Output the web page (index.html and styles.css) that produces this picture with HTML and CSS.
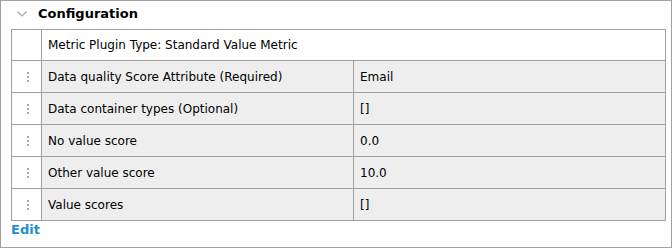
FILE: index.html
```html
<!DOCTYPE html>
<html lang="en">
<head>
    <meta charset="UTF-8">
    <title>Configuration</title>
    <link rel="stylesheet" href="styles.css">
</head>
<body>
    <div class="panel">
        <div class="panel-header">
            <svg class="chevron" width="10" height="6" viewBox="0 0 10 6">
                <path d="M0.5 0.5 L5 5 L9.5 0.5" fill="none" stroke="#a8a8a8" stroke-width="1.2"/>
            </svg>
            <span class="panel-title">Configuration</span>
        </div>
        <table class="config-table">
            <tr class="type-row">
                <td class="handle"></td>
                <td colspan="2">Metric Plugin Type: Standard Value Metric</td>
            </tr>
            <tr>
                <td class="handle"><span class="dots"></span></td>
                <td class="name">Data quality Score Attribute (Required)</td>
                <td>Email</td>
            </tr>
            <tr>
                <td class="handle"><span class="dots"></span></td>
                <td class="name">Data container types (Optional)</td>
                <td>[]</td>
            </tr>
            <tr>
                <td class="handle"><span class="dots"></span></td>
                <td class="name">No value score</td>
                <td>0.0</td>
            </tr>
            <tr>
                <td class="handle"><span class="dots"></span></td>
                <td class="name">Other value score</td>
                <td>10.0</td>
            </tr>
            <tr>
                <td class="handle"><span class="dots"></span></td>
                <td class="name">Value scores</td>
                <td>[]</td>
            </tr>
        </table>
        <a class="edit-link" href="#">Edit</a>
    </div>
</body>
</html>
```

FILE: styles.css
```css
/* Base page */
body {
    margin: 0;
    font-family: 'DejaVu Sans', sans-serif;
    font-size: 12px;
    color: #000;
    background: #fff;
}
/* Outer bordered panel */
.panel {
    width: 672px;
    height: 248px;
    box-sizing: border-box;
    border: 1px solid #a0a0a0;
    padding: 0 5px 0 10px;
}
.panel-header {
    display: flex;
    align-items: center;
    box-sizing: border-box;
    height: 28px;
    padding: 0 0 3px 6px;
}
.chevron {
    margin-right: 11px;
}
.panel-title {
    font-weight: bold;
    font-size: 13px;
}
/* Property table */
.config-table {
    width: 655px;
    border-collapse: collapse;
}
.config-table td {
    border: 1px solid #a0a0a0;
    height: 32px;
    padding: 0 0 0 6px;
    background: #eeeeee;
    box-sizing: border-box;
}
.config-table .type-row td {
    background: #fff;
    height: 31px;
}
.config-table td.handle {
    width: 30px;
    padding: 0 0 0 2px;
    background: #fff;
    text-align: center;
}
.config-table td.name {
    width: 312px;
}
.dots {
    display: inline-block;
    width: 2px;
    height: 2px;
    background: #a8a8a8;
    box-shadow: 0 4px 0 #a8a8a8, 0 8px 0 #a8a8a8;
    vertical-align: middle;
    position: relative;
    top: -4px;
}
.edit-link {
    display: inline-block;
    margin-top: 1px;
    font-weight: bold;
    font-size: 13px;
    color: #1e90d2;
    text-decoration: none;
}
```
